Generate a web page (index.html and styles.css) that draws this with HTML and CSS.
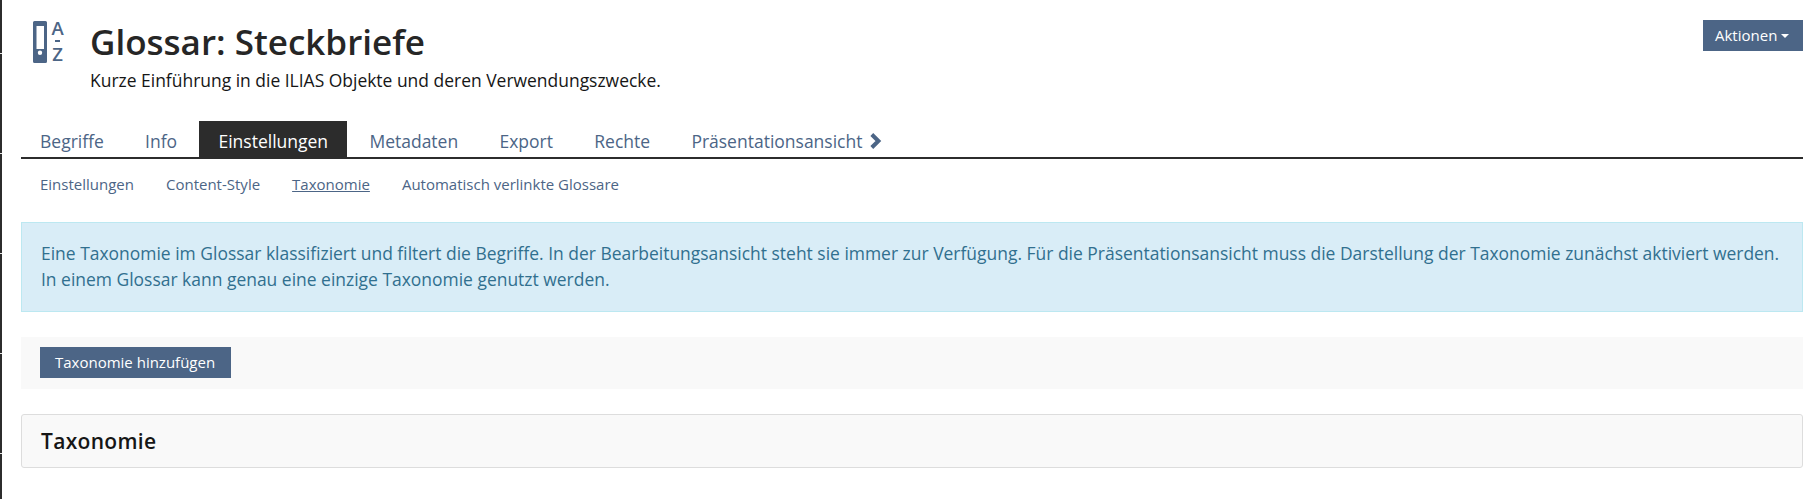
FILE: index.html
```html
<!DOCTYPE html>
<html lang="de">
<head>
<meta charset="utf-8">
<title>Glossar: Steckbriefe</title>
<link rel="stylesheet" href="styles.css">
</head>
<body>
<div class="edge"></div>
<main class="page">
  <header class="head">
    <svg class="obj-icon" width="32" height="55" viewBox="0 -6 32 55" aria-hidden="true">
      <path fill="#4c6586" fill-rule="evenodd" d="M1.500 0h11a1.500 1.500 0 0 1 1.500 1.500v39a1.500 1.500 0 0 1-1.500 1.500h-11A1.500 1.500 0 0 1 0 40.500v-39A1.500 1.500 0 0 1 1.500 0zM3.500 5v23h7.500V5zM7 29.500a2.200 2.200 0 1 0 0 4.400a2.200 2.200 0 0 0 0-4.400z"/>
      <text class="az" x="24.500" y="14" text-anchor="middle">A</text>
      <rect x="22" y="19" width="5" height="2" fill="#4c6586"/>
      <text class="az" x="24.500" y="40" text-anchor="middle">Z</text>
    </svg>
    <div class="head-text">
      <h1 class="title">Glossar: Steckbriefe</h1>
      <p class="subtitle">Kurze Einführung in die ILIAS Objekte und deren Verwendungszwecke.</p>
    </div>
    <a class="btn btn-actions" href="#">Aktionen<span class="caret"></span></a>
  </header>

  <nav class="tabs">
    <a class="tab" href="#">Begriffe</a>
    <a class="tab" href="#">Info</a>
    <a class="tab active" href="#">Einstellungen</a>
    <a class="tab" href="#">Metadaten</a>
    <a class="tab" href="#">Export</a>
    <a class="tab" href="#">Rechte</a>
    <a class="tab" href="#"><span>Präsentationsansicht</span><svg class="chev" width="13" height="16" viewBox="0 0 13 16" aria-hidden="true"><path d="M2.800 1.500 9.400 8 2.800 14.500" fill="none" stroke="#4c6586" stroke-width="4"/></svg></a>
  </nav>

  <nav class="subtabs">
    <a class="subtab" href="#">Einstellungen</a>
    <a class="subtab" href="#">Content-Style</a>
    <a class="subtab current" href="#">Taxonomie</a>
    <a class="subtab" href="#">Automatisch verlinkte Glossare</a>
  </nav>

  <div class="alert">Eine Taxonomie im Glossar klassifiziert und filtert die Begriffe. In der Bearbeitungsansicht steht sie immer zur Verfügung. Für die Präsentationsansicht muss die Darstellung der Taxonomie zunächst aktiviert werden.<br>In einem Glossar kann genau eine einzige Taxonomie genutzt werden.</div>

  <div class="toolbar">
    <a class="btn btn-add" href="#">Taxonomie hinzufügen</a>
  </div>

  <section class="panel">
    <h2 class="panel-title">Taxonomie</h2>
  </section>
</main>
</body>
</html>
```
FILE: styles.css
```css
* { box-sizing: border-box; }
html, body { margin: 0; padding: 0; background: #fff; }
body {
  position: relative;
  height: 499px;
  overflow: hidden;
  font-family: "Open Sans", "Noto Sans", sans-serif;
  font-size: 17.5px;
  color: #161616;
}
a { text-decoration: none; }
.edge {
  position: absolute;
  left: 0; top: 0; bottom: 0;
  width: 2px;
  background: repeating-linear-gradient(to bottom, #2c2c2c 0 53px, #e8e8e8 53px 54px, #2c2c2c 54px 100px);
}
.page { padding: 21px 13px 0 21px; }
.head { display: flex; align-items: flex-start; height: 100px; padding-left: 12px; }
.obj-icon { flex: none; margin-top: -6px; margin-bottom: -6px; }
.az { font-family: "Open Sans", sans-serif; font-size: 18.5px; font-weight: 600; fill: #4c6586; }
.head-text { flex: 1; margin-left: 25px; }
.title { margin: 0; font-size: 35px; line-height: 42px; font-weight: 600; color: #262626; }
.subtitle { margin: 5px 0 0; font-size: 17.47px; line-height: 24px; color: #161616; }
.btn {
  display: inline-flex;
  align-items: center;
  height: 31px;
  padding: 0 15px 1px;
  background: #4c6586;
  color: #fff;
  font-size: 15px;
  white-space: nowrap;
}
.btn-add { padding-right: 16px; }
.btn-actions { flex: none; width: 100px; padding: 0 12px 2px; margin-top: -1px; }
.caret {
  display: inline-block;
  margin-left: 4px;
  margin-top: 2px;
  border-top: 4.5px solid #fff;
  border-left: 4.5px solid transparent;
  border-right: 4.5px solid transparent;
}
.tabs { display: flex; height: 38px; border-bottom: 2px solid #2c2c2c; }
.tab {
  display: flex;
  align-items: center;
  gap: 7px;
  padding: 3px 19px 0;
  margin-right: 3.3px;
  color: #4c6586;
  font-size: 17.5px;
  white-space: nowrap;
}
.tab.active { background: #2c2c2c; color: #fff; }
.chev { flex: none; }
.subtabs { display: flex; gap: 32px; padding: 15px 19px 0; height: 63px; }
.subtab { color: #4c6586; font-size: 15px; line-height: 20px; }
.subtab.current { text-decoration: underline; }
.alert {
  height: 90px;
  padding: 18px 10px 18px 19px;
  background: #d9edf7;
  border: 1px solid #bce8f1;
  color: #31708f;
  font-size: 17.45px;
  line-height: 25.5px;
}
.toolbar {
  margin-top: 25px;
  height: 52px;
  padding: 10px 19px;
  background: #f9f9f9;
}
.panel {
  margin-top: 25px;
  height: 54px;
  padding: 0 19px;
  display: flex;
  align-items: center;
  background: #f9f9f9;
  border: 1px solid #dddddd;
  border-radius: 3px;
}
.panel-title { margin: 0; font-size: 21px; font-weight: 600; color: #161616; letter-spacing: .3px; }
```
